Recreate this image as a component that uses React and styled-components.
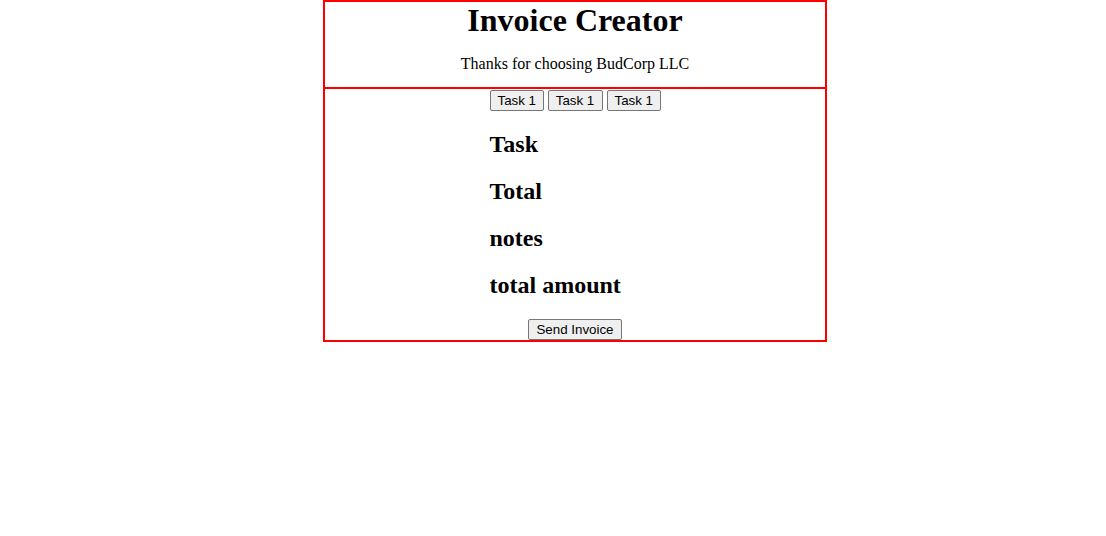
import React from "react";
import styled, { createGlobalStyle } from "styled-components";

const GlobalStyle = createGlobalStyle`
  body {
    margin: 0;
    background: #ffffff;
    font-family: "Liberation Serif", "Times New Roman", serif;
    color: #000000;
  }
`;

const Card = styled.div`
  box-sizing: border-box;
  width: 504px;
  margin-left: 323px;
  border: 2px solid red;
`;

const Header = styled.header`
  text-align: center;
  border-bottom: 2px solid red;
  h1 {
    margin: 0;
    font-size: 32px;
    font-weight: bold;
  }
  p {
    margin: 16px 0 14px;
    font-size: 16px;
  }
`;

const Body = styled.section`
  text-align: center;
`;

const Form = styled.div`
  display: inline-block;
  text-align: left;
  padding-top: 1px;
`;

const Tabs = styled.div`
  display: flex;
  justify-content: center;
  gap: 4px;
`;

const Button = styled.button`
  box-sizing: border-box;
  width: ${(p) => p.$w || "auto"};
  white-space: nowrap;
  font: 13.333px "Liberation Sans", Arial, sans-serif;
  color: #000000;
  background: #efefef;
  border: 1px solid #767676;
  border-radius: 2px;
  padding: 2px 7px;
  margin: 0;
`;

const Field = styled.h2`
  margin: 20px 0;
  font-size: 24px;
  font-weight: bold;
`;

const fields = ["Task", "Total", "notes", "total amount"];

export default function App() {
  return (
    <>
      <GlobalStyle />
      <Card>
        <Header>
          <h1>Invoice Creator</h1>
          <p>Thanks for choosing BudCorp LLC</p>
        </Header>
        <Body>
          <Form>
            <Tabs>
              <Button $w="54px">Task 1</Button>
              <Button $w="55px">Task 1</Button>
              <Button $w="54px">Task 1</Button>
            </Tabs>
            {fields.map((f) => (
              <Field key={f}>{f}</Field>
            ))}
          </Form>
          <div>
            <Button>Send Invoice</Button>
          </div>
        </Body>
      </Card>
    </>
  );
}
